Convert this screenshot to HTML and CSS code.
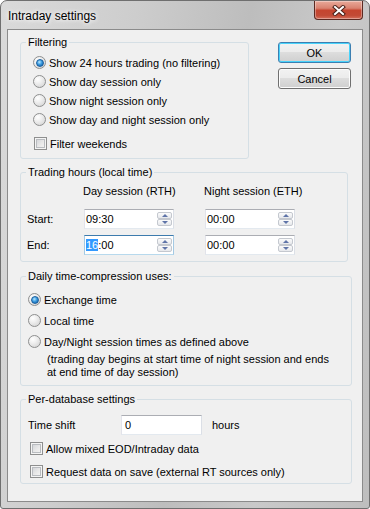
FILE: index.html
```html
<!DOCTYPE html>
<html lang="en">
<head>
    <meta charset="UTF-8">
    <meta name="viewport" content="width=device-width, initial-scale=1.0">
    <title>Intraday settings</title>
    <link rel="stylesheet" href="styles.css">
</head>
<body>
    <div class="window">
        <div class="titlebar">
            <span class="title">Intraday settings</span>
            <span class="close">
                <svg width="14" height="11" viewBox="0 0 14 11">
                    <path d="M3 2 L11 9 M11 2 L3 9" stroke="#4a2018" stroke-width="4" stroke-linecap="square"/>
                    <path d="M3 2 L11 9 M11 2 L3 9" stroke="#fff" stroke-width="2" stroke-linecap="square"/>
                </svg>
            </span>
        </div>
        <div class="client">
            <div class="top-row">
                <fieldset class="group group-filter">
                    <legend>Filtering</legend>
                    <div class="opt opt-filter"><span class="radio on"></span>Show 24 hours trading (no filtering)</div>
                    <div class="opt opt-filter"><span class="radio"></span>Show day session only</div>
                    <div class="opt opt-filter"><span class="radio"></span>Show night session only</div>
                    <div class="opt opt-filter"><span class="radio"></span>Show day and night session only</div>
                    <div class="opt opt-weekend"><span class="check"></span>Filter weekends</div>
                </fieldset>
                <div class="buttons">
                    <div class="btn btn-default">OK</div>
                    <div class="btn">Cancel</div>
                </div>
            </div>

            <fieldset class="group group-hours">
                <legend>Trading hours (local time)</legend>
                <div class="hours-grid">
                    <span></span>
                    <span class="col-head">Day session (RTH)</span>
                    <span class="col-head">Night session (ETH)</span>

                    <span class="row-label">Start:</span>
                    <div class="field time">
                        <span class="value">09:30</span>
                        <span class="spin"><span class="spin-up"></span><span class="spin-down"></span></span>
                    </div>
                    <div class="field time">
                        <span class="value">00:00</span>
                        <span class="spin"><span class="spin-up"></span><span class="spin-down"></span></span>
                    </div>

                    <span class="row-label">End:</span>
                    <div class="field time focused">
                        <span class="value"><span class="sel">16</span>:00</span>
                        <span class="spin"><span class="spin-up"></span><span class="spin-down"></span></span>
                    </div>
                    <div class="field time">
                        <span class="value">00:00</span>
                        <span class="spin"><span class="spin-up"></span><span class="spin-down"></span></span>
                    </div>
                </div>
            </fieldset>

            <fieldset class="group group-daily">
                <legend>Daily time-compression uses:</legend>
                <div class="opt opt-daily"><span class="radio on"></span>Exchange time</div>
                <div class="opt opt-daily"><span class="radio"></span>Local time</div>
                <div class="opt opt-daily"><span class="radio"></span>Day/Night session times as defined above</div>
                <p class="note">(trading day begins at start time of night session and ends<br>at end time of day session)</p>
            </fieldset>

            <fieldset class="group group-db">
                <legend>Per-database settings</legend>
                <div class="shift-row">
                    <span class="shift-label">Time shift</span>
                    <div class="field shift"><span class="value">0</span></div>
                    <span>hours</span>
                </div>
                <div class="opt opt-db"><span class="check"></span>Allow mixed EOD/Intraday data</div>
                <div class="opt opt-db"><span class="check"></span>Request data on save (external RT sources only)</div>
            </fieldset>
        </div>
    </div>
</body>
</html>
```

FILE: styles.css
```css
* {
    box-sizing: border-box;
}
body {
    margin: 0;
    font-family: "Liberation Sans", Arial, sans-serif;
    font-size: 11px;
    color: #000;
    background: #fff;
}

/* window frame */
.window {
    width: 370px;
    height: 509px;
    display: flex;
    flex-direction: column;
    padding: 0 6px 6px;
    border: 1px solid #6f6f6f;
    border-radius: 7px 7px 3px 3px;
    background: linear-gradient(100deg, #dadada 0%, #cdcdcd 30%, #bdbdbd 55%, #c9c9c9 75%, #bebebe 100%);
}
.titlebar {
    height: 28px;
    display: flex;
    justify-content: space-between;
    align-items: flex-start;
}
.title {
    font-size: 12px;
    line-height: 15px;
    padding: 8px 0 0 1px;
    text-shadow: 0 0 6px #fff, 0 0 4px #fff;
}
.close {
    width: 49px;
    height: 19px;
    display: flex;
    align-items: center;
    justify-content: center;
    border: 1px solid #5b2a22;
    border-top: none;
    border-radius: 0 0 4px 4px;
    background: linear-gradient(#e9aa9a 0%, #d98270 40%, #c5452f 52%, #c24a35 80%, #d4705c 100%);
    box-shadow: inset 0 0 0 1px rgba(255, 255, 255, 0.35);
}
.client {
    flex: 1;
    background: #f0f0f0;
    border: 1px solid #8b8b8b;
    padding: 6px 10px 0 12px;
}

/* group boxes */
.group {
    margin: 0;
    padding: 0 6px;
    min-width: 0;
    border: 1px solid #d5dfe5;
    border-radius: 3px;
}
.group legend {
    padding: 0 2px;
    margin-left: -1px;
    line-height: 13px;
}
.top-row {
    display: flex;
    align-items: flex-start;
}
.group-filter {
    width: 229px;
    padding-top: 4px;
    padding-bottom: 5px;
}
.group-hours {
    width: 328px;
    margin-top: 7px;
    padding-top: 6px;
    padding-bottom: 6px;
}
.group-daily {
    width: 332px;
    margin-top: 8px;
    padding-top: 6px;
    padding-bottom: 6px;
}
.group-db {
    width: 332px;
    margin-top: 7px;
    padding-top: 9px;
    padding-bottom: 0;
}

/* buttons */
.buttons {
    display: flex;
    flex-direction: column;
    gap: 5px;
    margin: 6px 0 0 29px;
}
.btn {
    width: 73px;
    height: 21px;
    display: flex;
    align-items: center;
    justify-content: center;
    border: 1px solid #707070;
    border-radius: 3px;
    background: linear-gradient(#f2f2f2 0%, #ebebeb 50%, #dddddd 50%, #cfcfcf 100%);
    box-shadow: inset 0 0 0 1px #fcfcfc;
}
.btn-default {
    border-color: #3c7fb1;
    box-shadow: inset 0 0 0 1px #48d3fb;
}

/* radio and check rows */
.opt {
    display: flex;
    align-items: center;
    white-space: nowrap;
}
.opt-filter {
    height: 19px;
    padding-left: 6px;
}
.opt-weekend {
    height: 19px;
    margin-top: 5px;
    padding-left: 7px;
}
.opt-daily {
    height: 21px;
    padding-left: 1px;
}
.opt-db {
    height: 23px;
    padding-left: 3px;
}
.radio {
    width: 13px;
    height: 13px;
    margin-right: 3px;
    display: inline-flex;
    align-items: center;
    justify-content: center;
    flex: none;
    border: 1px solid #8e8f8f;
    border-radius: 50%;
    background: radial-gradient(circle at 35% 30%, #ffffff 0%, #f0f0f0 35%, #cfcfcf 100%);
}
.radio.on::after {
    content: "";
    width: 6px;
    height: 6px;
    border-radius: 50%;
    background: radial-gradient(circle at 40% 35%, #b8e7ff 0%, #3a9be0 45%, #0f5597 100%);
    border: 1px solid #1b5f9e;
}
.check {
    width: 13px;
    height: 13px;
    margin-right: 3px;
    flex: none;
    border: 1px solid #8e8f8f;
    background: linear-gradient(135deg, #cbced3 0%, #e9e9e9 55%, #f8f8f8 100%);
    box-shadow: inset 0 0 0 1px #f4f4f4, inset 0 0 0 2px #b9bcc0;
}
.note {
    margin: 1px 0 0 20px;
    line-height: 13px;
}

/* trading hours grid */
.hours-grid {
    display: grid;
    grid-template-columns: 57px 121px 90px;
    grid-template-rows: 24px 26px 20px;
    align-items: start;
}
.col-head {
    line-height: 13px;
    margin-left: -1px;
    white-space: nowrap;
}
.row-label {
    line-height: 20px;
}

/* text fields */
.field {
    height: 20px;
    display: flex;
    align-items: center;
    background: #fff;
    border: 1px solid;
    border-color: #abadb3 #dbdfe6 #e3e9ef #e2e3ea;
}
.field.focused {
    border-color: #3d7bad #a4c9e3 #b7d9ed #a4c9e3;
}
.field.time {
    width: 90px;
    padding-left: 1px;
}
.field.shift {
    width: 81px;
    padding-left: 3px;
}
.value {
    flex: 1;
    line-height: 13px;
}
.sel {
    background: #3399ff;
    color: #fff;
}
.spin {
    width: 15px;
    display: flex;
    flex-direction: column;
    margin-right: 1px;
}
.spin-up, .spin-down {
    height: 7px;
    display: flex;
    align-items: center;
    justify-content: center;
    border: 1px solid #c4c8cf;
    border-radius: 2px;
    background: linear-gradient(#fbfbfb, #e6e8ec);
}
.spin-up::after {
    content: "";
    border-left: 3px solid transparent;
    border-right: 3px solid transparent;
    border-bottom: 3px solid #5f74a8;
}
.spin-down::after {
    content: "";
    border-left: 3px solid transparent;
    border-right: 3px solid transparent;
    border-top: 3px solid #5f74a8;
}

/* per-database */
.shift-row {
    display: flex;
    align-items: center;
    height: 20px;
    margin-bottom: 2px;
    padding-left: 1px;
}
.shift-label {
    width: 93px;
}
.shift-row .field {
    margin-right: 10px;
}
```
